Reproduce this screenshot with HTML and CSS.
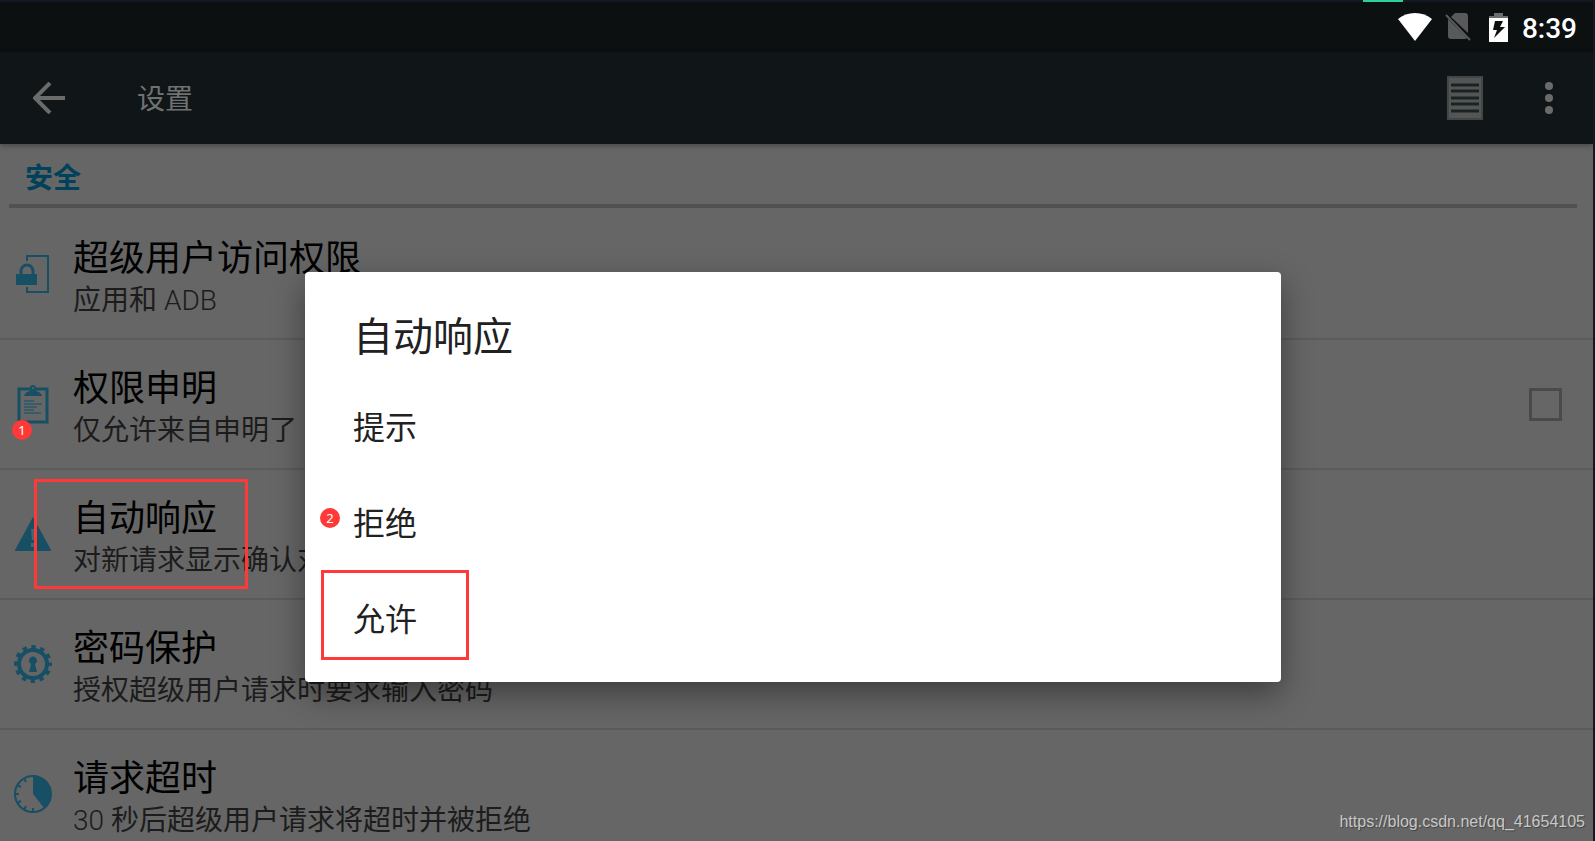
FILE: index.html
```
<!DOCTYPE html>
<html lang="zh-CN">
<head>
    <meta charset="UTF-8">
    <meta name="viewport" content="width=device-width, initial-scale=1.0">
    <title>设置</title>
    <link rel="stylesheet" href="styles.css">
</head>
<body>
    <div class="tab-mark"></div>
    <div class="screen">
        <div class="status-bar">
            <svg class="wifi" width="34" height="28" viewBox="0 0 34 28"><path d="M0 6Q7 0 17 0T34 6L17 28Z" fill="#fff"/></svg>
            <svg class="sim" width="26" height="28" viewBox="0 0 26 28">
                <path d="M10 0H20Q23 0 23 3V20L6 4ZM3 6L22 25Q21 26 20 26H6Q3 26 3 23Z" fill="#58595a"/>
                <path d="M1 2L25 27" stroke="#58595a" stroke-width="2"/>
            </svg>
            <svg class="battery" width="19" height="29" viewBox="0 0 19 29">
                <path d="M5 0H14V3H19V6H0V3H5Z" fill="#6c6d6d"/>
                <path d="M0 5H19V29H0Z" fill="#fff"/>
                <path d="M6 8H14L11 14H16L5 25L8 17H4Z" fill="#0c1011"/>
            </svg>
            <span class="clock">8:39</span>
        </div>

        <header class="app-bar">
            <button class="icon-button" aria-label="返回">
                <svg width="32" height="32" viewBox="0 0 32 32"><path d="M17 1L2 16L17 31M2 16H32" fill="none" stroke="#6a6b6b" stroke-width="4"/></svg>
            </button>
            <h1 class="app-title">设置</h1>
            <button class="icon-button" aria-label="日志">
                <svg width="36" height="44" viewBox="0 0 36 44">
                    <rect x="1" y="1" width="34" height="42" fill="#545656" stroke="#434646" stroke-width="2"/>
                    <path d="M4 9H32M4 15H32M4 22H32M4 28H32M4 35H32" stroke="#1b2224" stroke-width="3"/>
                </svg>
            </button>
            <button class="icon-button more" aria-label="更多">
                <svg width="8" height="32" viewBox="0 0 8 32" fill="#6a6b6b"><circle cx="4" cy="4" r="4"/><circle cx="4" cy="16" r="4"/><circle cx="4" cy="28" r="4"/></svg>
            </button>
        </header>

        <main class="settings">
            <h2 class="section-title">安全</h2>

            <div class="row">
                <svg class="row-icon" viewBox="0 0 40 40">
                    <path d="M14 7V2H35V38H14V33" fill="none" stroke="#174f65" stroke-width="2"/>
                    <path d="M8 20V17A6 6 0 0 1 20 17V20" fill="none" stroke="#174f65" stroke-width="3"/>
                    <path d="M3 20H24V31H3Z" fill="#174f65"/>
                </svg>
                <div class="row-text">
                    <div class="row-title">超级用户访问权限</div>
                    <div class="row-summary">应用和 <span class="thin">ADB</span></div>
                </div>
            </div>

            <div class="row">
                <svg class="row-icon" viewBox="0 0 40 40">
                    <path d="M6 5H34V38H6Z" fill="none" stroke="#174f65" stroke-width="3"/>
                    <path d="M11 12Q12 8 17 7V4A3 3 0 0 1 23 4V7Q28 8 29 12Z" fill="#174f65"/>
                    <circle cx="20" cy="4" r="1" fill="#666"/>
                    <path d="M11 17H21M11 20H29M11 23H24M11 26H21M11 29H28" stroke="#2a586b" stroke-width="1.5"/>
                </svg>
                <div class="row-text">
                    <label class="row-title" for="declare">权限申明</label>
                    <div class="row-summary">仅允许来自申明了</div>
                </div>
                <input class="row-check" type="checkbox" id="declare">
                <span class="badge badge-one">1</span>
            </div>

            <div class="row">
                <svg class="row-icon" viewBox="0 0 40 40">
                    <path d="M20 3L38 36Q39 37 37 37H3Q1 37 2 36Z" fill="#174f65"/>
                    <path d="M18 15H22L21 26H19ZM18 29H22V33H18Z" fill="#4b6470"/>
                </svg>
                <div class="row-text">
                    <div class="row-title">自动响应</div>
                    <div class="row-summary">对新请求显示确认对话框</div>
                </div>
                <span class="mark mark-row"></span>
            </div>

            <div class="row">
                <svg class="row-icon" viewBox="0 0 40 40">
                    <circle cx="20" cy="20" r="14" fill="none" stroke="#174f65" stroke-width="4"/>
                    <circle cx="20" cy="20" r="17" fill="none" stroke="#174f65" stroke-width="4" stroke-dasharray="4.4 4.5" stroke-dashoffset="2.2"/>
                    <path d="M18 20A4 4 0 1 1 22 20L24 28H16Z" fill="#174f65"/>
                </svg>
                <div class="row-text">
                    <div class="row-title">密码保护</div>
                    <div class="row-summary">授权超级用户请求时要求输入密码</div>
                </div>
            </div>

            <div class="row">
                <svg class="row-icon" viewBox="0 0 40 40">
                    <circle cx="20" cy="20" r="18" fill="none" stroke="#174f65" stroke-width="2"/>
                    <path d="M20 20V2A18 18 0 0 1 31 34Z" fill="#174f65"/>
                    <path d="M20 38V34M2 20H6M11 4L13 8M4 11L8 13M4 29L8 27M11 36L13 32" stroke="#174f65" stroke-width="2"/>
                </svg>
                <div class="row-text">
                    <div class="row-title">请求超时</div>
                    <div class="row-summary"><span class="thin">30</span> 秒后超级用户请求将超时并被拒绝</div>
                </div>
            </div>
        </main>
    </div>

    <div class="overlay">
        <div class="dialog" role="dialog" aria-labelledby="dialogTitle">
            <h2 class="dialog-title" id="dialogTitle">自动响应</h2>
            <button class="option">提示</button>
            <button class="option">拒绝<span class="badge badge-two">2</span></button>
            <button class="option">允许<span class="mark mark-option"></span></button>
        </div>
    </div>

    <a class="watermark" href="https://blog.csdn.net/qq_41654105">https://blog.csdn.net/qq_41654105</a>
</body>
</html>
```
FILE: styles.css
```
* {
    box-sizing: border-box;
}
body {
    margin: 0;
    height: 100vh;
    padding: 2px 2px 0 0;
    overflow: hidden;
    position: relative;
    background: #141826;
    font-family: Roboto, "Noto Sans CJK SC", sans-serif;
}
h1, h2 {
    margin: 0;
    font-weight: 400;
}
button {
    margin: 0;
    padding: 0;
    border: none;
    background: none;
    font-family: inherit;
    cursor: pointer;
}
svg {
    display: block;
    flex: none;
}
.tab-mark {
    position: absolute;
    top: 0;
    right: 192px;
    width: 40px;
    height: 2px;
    background: #2bd19b;
}
.screen {
    height: 100%;
    overflow: hidden;
    background: #666;
}

/* status bar */
.status-bar {
    display: flex;
    justify-content: flex-end;
    align-items: center;
    height: 50px;
    padding-right: 16px;
    background: #0c1011;
}
.sim {
    margin: 0 18px 0 13px;
}
.clock {
    margin-left: 14px;
    padding-top: 3px;
    color: #fff;
    font-size: 28px;
    font-weight: 500;
    line-height: 32px;
}

/* app bar */
.app-bar {
    position: relative;
    display: flex;
    align-items: center;
    height: 92px;
    padding: 0 40px 0 33px;
    background: #101517;
    box-shadow: 0 2px 5px rgba(0, 0, 0, 0.3);
}
.app-title {
    flex: 1;
    margin-left: 72px;
    padding-top: 3px;
    color: #707272;
    font-size: 28px;
    line-height: 40px;
}
.more {
    margin-left: 62px;
}

/* settings list */
.section-title {
    height: 64px;
    margin: 0 16px 2px 9px;
    padding: 15px 16px 0;
    border-bottom: 4px solid #515151;
    color: #00425a;
    font-size: 28px;
    font-weight: 700;
    line-height: 40px;
}
.row {
    position: relative;
    display: flex;
    align-items: center;
    height: 130px;
    padding: 0 31px 0 13px;
    border-bottom: 2px solid #5b5b5b;
}
.row-icon {
    width: 40px;
    height: 40px;
}
.row-text {
    flex: 1;
    margin-left: 20px;
    padding-top: 9px;
    white-space: nowrap;
}
.row-title {
    display: block;
    color: #000;
    font-size: 36px;
    line-height: 44px;
}
.row-summary {
    color: #1c1c1c;
    font-size: 28px;
    line-height: 40px;
}
.thin {
    font-weight: 300;
}
.row-check {
    appearance: none;
    width: 33px;
    height: 33px;
    margin: 0;
    border: 3px solid #4a4a4a;
}

/* numbered marks */
.badge {
    position: absolute;
    width: 20px;
    height: 20px;
    border-radius: 50%;
    background: #ff3838;
    color: #fff;
    font-family: "Noto Sans", sans-serif;
    font-size: 13px;
    line-height: 20px;
    text-align: center;
}
.badge-one {
    top: 80px;
    left: 12px;
}
.badge-two {
    top: 33px;
    left: 15px;
}
.mark {
    position: absolute;
    border: 3px solid #ff3838;
}
.mark-row {
    top: 9px;
    left: 34px;
    width: 214px;
    height: 110px;
}
.mark-option {
    top: -1px;
    left: 16px;
    width: 148px;
    height: 90px;
}

/* dialog */
.overlay {
    position: absolute;
    inset: 0;
    display: flex;
    align-items: center;
    justify-content: center;
    padding: 113px 9px 0 0;
}
.dialog {
    width: 976px;
    max-width: 90%;
    padding: 42px 0 15px;
    border-radius: 4px;
    background: #fff;
    box-shadow: 0 12px 32px rgba(0, 0, 0, 0.4);
    color: #212121;
}
.dialog-title {
    padding: 0 48px;
    margin-bottom: 17px;
    font-size: 40px;
    line-height: 48px;
}
.option {
    position: relative;
    display: block;
    width: 100%;
    height: 96px;
    padding: 0 48px 5px;
    color: #212121;
    font-size: 32px;
    text-align: left;
}

.watermark {
    position: absolute;
    right: 10px;
    bottom: 9px;
    color: #c8c8c8;
    font-family: "Liberation Sans", Arial, sans-serif;
    font-size: 16px;
    line-height: 20px;
    text-decoration: none;
    text-shadow: 1px 1px 1px #444;
}
```
